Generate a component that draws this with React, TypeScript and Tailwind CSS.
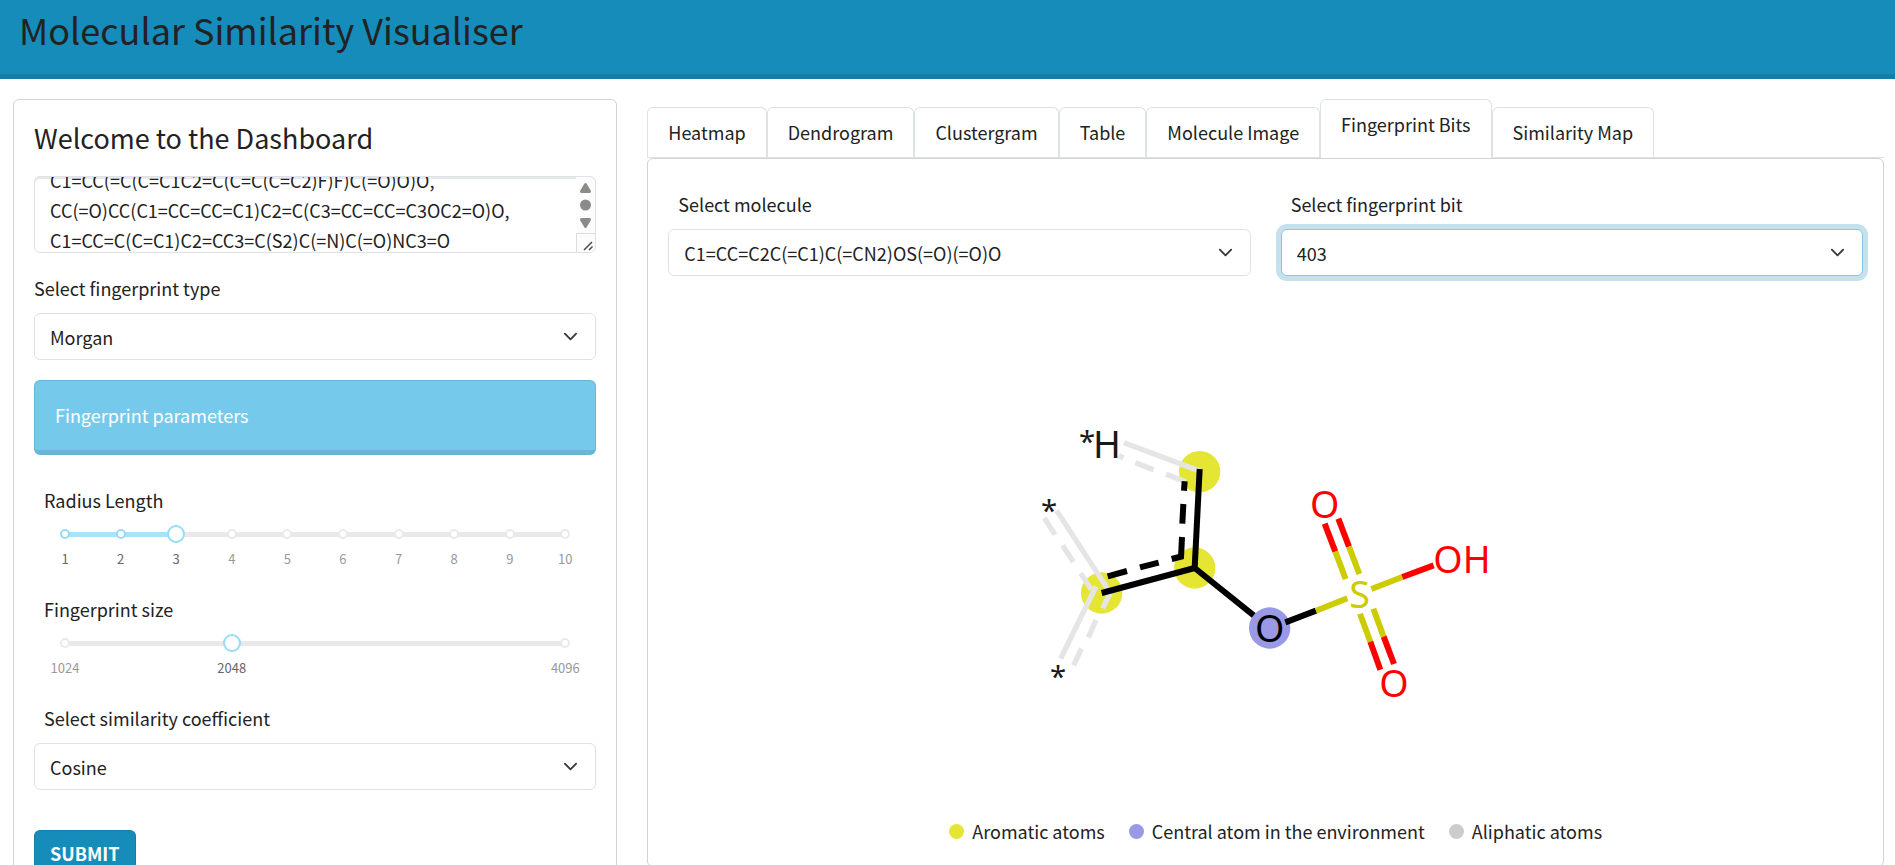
import { useEffect, useRef, useState } from "react";
import type { ReactNode } from "react";

const FONT = "font-['Noto_Sans_CJK_SC','Open_Sans',sans-serif]";

function Chevron() {
  return (
    <svg viewBox="0 0 16 16" aria-hidden="true" className="pointer-events-none absolute top-4 right-[18px] size-[15px]">
      <path d="m2 5 6 6 6-6" fill="none" stroke="#343a40" strokeWidth="2" strokeLinecap="round" strokeLinejoin="round" />
    </svg>
  );
}

type SelectProps = {
  id: string;
  label: string;
  options: string[];
  indent?: boolean;
  focused?: boolean;
};

function SelectField({ id, label, options, indent = false, focused = false }: SelectProps) {
  return (
    <div className="flex flex-col gap-[10px]">
      <label htmlFor={id} className={indent ? "px-[10px] leading-[30px]" : "leading-[30px]"}>
        {label}
      </label>
      <div className="relative">
        <select
          id={id}
          className={
            focused
              ? "h-[47px] w-full appearance-none rounded-md border border-[#8ac6dd] bg-white px-[15px] leading-[30px] outline-none ring-[5px] ring-[#c4e1ed]"
              : "h-[47px] w-full appearance-none rounded-md border border-[#dee2e6] bg-white px-[15px] leading-[30px] outline-none"
          }
        >
          {options.map((o) => (
            <option key={o}>{o}</option>
          ))}
        </select>
        <Chevron />
      </div>
    </div>
  );
}

type Mark = { value: number; label: string };
type SliderProps = {
  id: string;
  label: string;
  min: number;
  max: number;
  step: number;
  initial: number;
  marks: Mark[];
  filled?: boolean;
};

function SliderField({ id, label, min, max, step, initial, marks, filled = false }: SliderProps) {
  const [value, setValue] = useState(initial);
  const pct = (v: number) => ((v - min) / (max - min)) * 100;
  const isActive = (v: number) => (filled ? v <= value : v === value);
  return (
    <div className="flex flex-col">
      <label htmlFor={id} className="px-[10px] leading-[30px]">
        {label}
      </label>
      <div className="relative mx-[31px] mt-[10px] h-[18px]">
        <div className="absolute inset-x-0 top-[7px] h-[5px] rounded-full bg-[#e9e9e9]" />
        {filled && (
          <div className="absolute top-[7px] left-0 h-[5px] rounded-full bg-[#abe2fb]" style={{ width: `${pct(value)}%` }} />
        )}
        {marks.map((m) => (
          <span
            key={m.value}
            className={
              filled && isActive(m.value)
                ? "absolute top-1 size-[10px] -translate-x-1/2 rounded-full border-2 border-[#96dbfa] bg-white"
                : "absolute top-1 size-[10px] -translate-x-1/2 rounded-full border-2 border-[#e9e9e9] bg-white"
            }
            style={{ left: `${pct(m.value)}%` }}
          />
        ))}
        <input
          id={id}
          type="range"
          min={min}
          max={max}
          step={step}
          value={value}
          onChange={(e) => setValue(Number(e.target.value))}
          className="absolute inset-y-0 -inset-x-[9px] w-[calc(100%+18px)] appearance-none bg-transparent outline-none [&::-webkit-slider-thumb]:size-[18px] [&::-webkit-slider-thumb]:appearance-none [&::-webkit-slider-thumb]:rounded-full [&::-webkit-slider-thumb]:border-2 [&::-webkit-slider-thumb]:border-[#96dbfa] [&::-webkit-slider-thumb]:bg-white"
        />
      </div>
      <div className="relative mx-[31px] mt-[6px] h-5">
        {marks.map((m) => (
          <span
            key={m.value}
            className={
              isActive(m.value)
                ? "absolute -translate-x-1/2 text-[13px] leading-5 text-[#666]"
                : "absolute -translate-x-1/2 text-[13px] leading-5 text-[#999]"
            }
            style={{ left: `${pct(m.value)}%` }}
          >
            {m.label}
          </span>
        ))}
      </div>
    </div>
  );
}

const SMILES = [
  "C1=CC(=C(C=C1C2=C(C=C(C=C2)F)F)C(=O)O)O,",
  "CC(=O)CC(C1=CC=CC=C1)C2=C(C3=CC=CC=C3OC2=O)O,",
  "C1=CC=C(C=C1)C2=CC3=C(S2)C(=N)C(=O)NC3=O",
].join("\n");

function SmilesInput() {
  const ref = useRef<HTMLTextAreaElement>(null);
  useEffect(() => {
    if (ref.current) ref.current.scrollTop = 21;
  }, []);
  return (
    <div className="relative">
      <textarea
        ref={ref}
        aria-label="SMILES strings"
        defaultValue={SMILES}
        className="block h-[77px] w-full resize-none rounded-md border border-[#dee2e6] bg-white px-[15px] py-[9px] leading-[30px] shadow-[inset_0_2px_0_#e6e8ec] outline-none [scrollbar-width:none]"
      />
      <svg viewBox="0 0 19 75" aria-hidden="true" className="absolute top-px right-px h-[75px] w-[19px] rounded-r-md">
        <rect width="19" height="75" fill="#fcfcfc" />
        <path d="M8.300 6.800 Q9.500 5 10.700 6.800 L14.700 13.500 Q15.500 16 13.500 16 H5.500 Q3.500 16 4.300 13.500 Z" fill="#8b8b8b" />
        <circle cx="9.500" cy="28" r="5.500" fill="#8b8b8b" />
        <path d="M8.300 50.200 Q9.500 52 10.700 50.200 L14.700 43.500 Q15.500 41 13.500 41 H5.500 Q3.500 41 4.300 43.500 Z" fill="#8b8b8b" />
        <path d="M0.500 75 V56.500 H19" fill="none" stroke="#dcdcdc" />
        <path d="M8 73 L16 65 M13 73 L16.500 69.500" fill="none" stroke="#4a4a4a" strokeWidth="1.500" />
      </svg>
    </div>
  );
}

type Bond = [number, number, number, number, string];
const GREY = "#e5e5e5";
const BLACK = "#000000";
const RED = "#ff0000";
const SULFUR = "#cccc00";

const BONDS: Bond[] = [
  [252, 95, 479, 180, GREY],
  [236, 134, 251, 140, GREY],
  [286, 155, 341, 176, GREY],
  [378, 190, 437, 212, GREY],
  [50, 299, 202, 532, GREY],
  [13, 321, 45, 371, GREY],
  [68, 403, 100, 453, GREY],
  [122, 487, 154, 536, GREY],
  [168, 526, 62, 743, GREY],
  [211, 545, 188, 592, GREY],
  [168, 627, 145, 679, GREY],
  [124, 713, 101, 763, GREY],
  [479, 174, 464, 471, BLACK],
  [434, 211, 432, 239, BLACK],
  [430, 279, 427, 338, BLACK],
  [426, 378, 423, 440, BLACK],
  [430, 435, 395, 444, BLACK],
  [356, 455, 300, 469, BLACK],
  [261, 480, 203, 496, BLACK],
  [736, 634, 828, 599, BLACK],
  [828, 599, 922, 562, SULFUR],
  [994, 534, 1087, 498, SULFUR],
  [1087, 498, 1181, 463, RED],
  [854, 338, 886, 422, RED],
  [886, 422, 917, 504, SULFUR],
  [895, 323, 927, 407, RED],
  [927, 407, 958, 489, SULFUR],
  [960, 608, 991, 692, SULFUR],
  [991, 692, 1021, 776, RED],
  [1000, 593, 1031, 677, SULFUR],
  [1031, 677, 1062, 759, RED],
];

function Molecule() {
  return (
    <svg viewBox="-39 0 1434 900" role="img" aria-label="Fingerprint bit environment" className="h-[300px] w-[478px]">
      <circle cx="479" cy="182" r="62" fill="#e5e533" />
      <circle cx="464" cy="471" r="62" fill="#e5e533" />
      <circle cx="185" cy="546" r="62" fill="#e5e533" />
      <circle cx="689" cy="651" r="62" fill="#9999e5" />
      {BONDS.map(([x1, y1, x2, y2, color], i) => (
        <line key={i} x1={x1} y1={y1} x2={x2} y2={y2} stroke={color} strokeWidth={color === GREY ? 16 : 18} />
      ))}
      <path d="M185 546 L464 471 L641 613" fill="none" stroke="#000000" strokeWidth="18" strokeLinejoin="bevel" />
      <g fontFamily="'Noto Sans', sans-serif" fontSize="113" textAnchor="middle">
        <text x="689" y="692" fill="#000000">O</text>
        <text x="959" y="590" fill={SULFUR}>S</text>
        <text x="854" y="320" fill={RED}>O</text>
        <text x="1062" y="859" fill={RED}>O</text>
        <text x="1180" y="485" fill={RED} textAnchor="start">OH</text>
        <text x="201" y="141" fill="#191919">H</text>
        <text x="141" y="124" fill="#191919" fontSize="88">*</text>
        <text x="27" y="329" fill="#191919" fontSize="88">*</text>
        <text x="54" y="828" fill="#191919" fontSize="88">*</text>
      </g>
    </svg>
  );
}

const TABS = ["Heatmap", "Dendrogram", "Clustergram", "Table", "Molecule Image", "Fingerprint Bits", "Similarity Map"];

function Tabs() {
  const [active, setActive] = useState("Fingerprint Bits");
  return (
    <div role="tablist" className="flex items-end border-b border-[#dee2e6]">
      {TABS.map((t) => (
        <button
          key={t}
          type="button"
          role="tab"
          aria-selected={t === active}
          onClick={() => setActive(t)}
          className={
            t === active
              ? "-mb-px h-[59px] rounded-t-md border border-b-0 border-[#dee2e6] bg-white px-5 pb-[10px] leading-[30px]"
              : "h-[50px] rounded-t-md border border-b-0 border-[#dee2e6] bg-white px-5 pb-px leading-[30px]"
          }
        >
          {t}
        </button>
      ))}
    </div>
  );
}

function LegendItem({ children, dot }: { children: ReactNode; dot: string }) {
  return (
    <li className="flex items-center gap-2 leading-[30px]">
      <span className={dot} />
      {children}
    </li>
  );
}

export default function App() {
  return (
    <div className={`h-screen overflow-hidden bg-white text-[18px] text-[#222] ${FONT}`}>
      <header className="h-[79px] border-b-[5px] border-[#137ea7] bg-[#158cba] px-[19px]">
        <h1 className="text-[36px] leading-[58px]">Molecular Similarity Visualiser</h1>
      </header>
      <main className="flex items-start gap-[30px] pt-5 pr-[11px] pl-[13px]">
        <section className="w-[32.300%] shrink-0 rounded-md border border-[#d3d3d3] px-5 pb-5">
          <h2 className="pt-5 text-[27px] leading-9">Welcome to the Dashboard</h2>
          <div className="mt-5">
            <SmilesInput />
          </div>
          <div className="mt-5">
            <SelectField id="fp-type" label="Select fingerprint type" options={["Morgan"]} />
          </div>
          <div className="mt-5 h-[75px] rounded-md border border-b-[5px] border-[#69b6d4] bg-[#75caeb] px-5 pt-[19px] leading-[30px] text-white">
            Fingerprint parameters
          </div>
          <div className="mt-[30px]">
            <SliderField
              id="radius"
              label="Radius Length"
              min={1}
              max={10}
              step={1}
              initial={3}
              filled
              marks={[1, 2, 3, 4, 5, 6, 7, 8, 9, 10].map((v) => ({ value: v, label: String(v) }))}
            />
          </div>
          <div className="mt-[25px]">
            <SliderField
              id="fp-size"
              label="Fingerprint size"
              min={1024}
              max={4096}
              step={1024}
              initial={2048}
              marks={[1024, 2048, 4096].map((v) => ({ value: v, label: String(v) }))}
            />
          </div>
          <div className="mt-[25px]">
            <SelectField id="coefficient" label="Select similarity coefficient" options={["Cosine"]} indent />
          </div>
          <button
            type="button"
            className="mt-10 h-[50px] rounded-md border border-b-[5px] border-[#137ea7] bg-[#158cba] px-[15px] leading-[30px] font-bold text-white uppercase"
          >
            Submit
          </button>
        </section>
        <section className="min-w-0 flex-1">
          <Tabs />
          <div className="rounded-md border border-[#d3d3d3] px-5 pt-[30px] pb-5">
            <div className="grid grid-cols-2 gap-[30px]">
              <SelectField id="molecule" label="Select molecule" options={["C1=CC=C2C(=C1)C(=CN2)OS(=O)(=O)O"]} indent />
              <SelectField id="bit" label="Select fingerprint bit" options={["403"]} indent focused />
            </div>
            <div className="flex justify-center pt-[135px] pb-[105px]">
              <Molecule />
            </div>
            <ul className="flex justify-center gap-6 pl-5">
              <LegendItem dot="size-[15px] rounded-full bg-[#e5e533]">Aromatic atoms</LegendItem>
              <LegendItem dot="size-[15px] rounded-full bg-[#9999e5]">Central atom in the environment</LegendItem>
              <LegendItem dot="size-[15px] rounded-full bg-[#cccccc]">Aliphatic atoms</LegendItem>
            </ul>
          </div>
        </section>
      </main>
    </div>
  );
}
